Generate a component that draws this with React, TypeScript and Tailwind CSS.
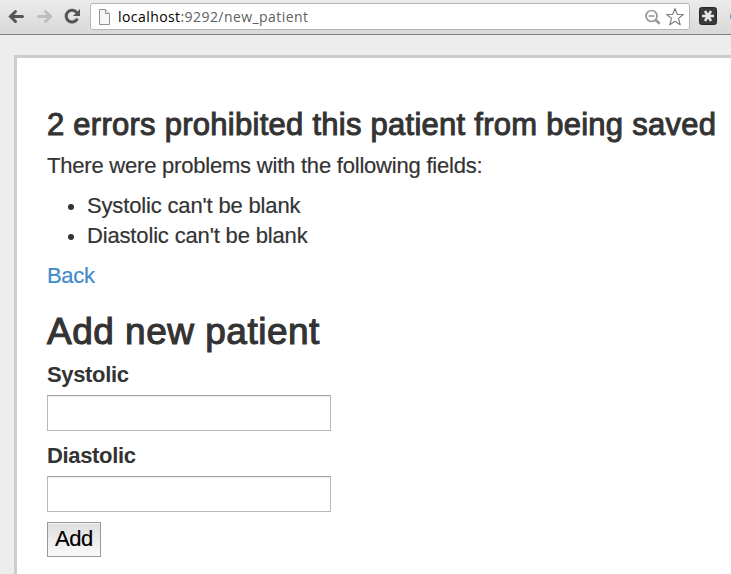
function BrowserBar() {
  return (
    <header className="flex h-[35px] shrink-0 items-start border-b border-[#808280] bg-linear-to-b from-[#ebebeb] to-[#d8d9d7]">
      <svg width="90" height="34" viewBox="0 0 90 34" fill="none" className="shrink-0">
        <g strokeWidth="3" strokeLinecap="round">
          <path d="M11 16.5H22.5M15.5 11.5L10.5 16.5L15.5 21.5" stroke="#555" />
          <path d="M38.5 16.5H50M45.5 11.5L50.5 16.5L45.5 21.5" stroke="#bdbdbd" />
        </g>
        <path d="M76.8 12.6A5.9 5.9 0 1 0 77.4 18.6" stroke="#555" strokeWidth="3" />
        <path d="M80 9V16H73Z" fill="#555" />
      </svg>
      <div className="mt-[3px] flex h-[27px] w-[600px] shrink-0 items-center rounded-[3px] border border-[#b5b7b5] bg-white pl-[7px]">
        <svg width="13" height="16" viewBox="0 0 13 16" className="shrink-0">
          <path d="M1.5 .5H7.5L11.5 4.5V15.5H1.5Z" fill="#f6f6f6" stroke="#919191" />
          <path d="M7.5 .5V4.5H11.5" fill="#eee" stroke="#919191" />
        </svg>
        <span className="ml-[7px] whitespace-nowrap font-['Open_Sans',sans-serif] text-[14px] leading-[20px] tracking-[0.43px] text-[#606060]">
          <span className="text-black">localhost</span>:9292/new_patient
        </span>
        <svg width="44" height="20" viewBox="0 0 44 20" fill="none" className="ml-auto shrink-0">
          <circle cx="6.5" cy="9" r="5.5" stroke="#999" strokeWidth="1.7" />
          <path d="M3.7 9H9.3" stroke="#999" strokeWidth="1.6" />
          <path d="M10.5 12.8L14.6 16.8" stroke="#999" strokeWidth="2.6" />
          <path d="M30 1.5L32.2 7.3L38.3 7.5L33.5 11.4L35.2 17.8L30 14.2L24.8 17.8L26.5 11.4L21.7 7.5L27.8 7.3Z" stroke="#808080" strokeWidth="1.2" strokeLinejoin="round" />
        </svg>
      </div>
      <svg width="41" height="34" viewBox="0 0 41 34" className="shrink-0">
        <rect x="9.5" y="7.5" width="17" height="17" rx="2" fill="#393939" stroke="#292929" />
        <path d="M12 16H24M15 11L21 21M21 11L15 21" stroke="#e8e8e8" strokeWidth="2.5" />
        <circle cx="45" cy="16.5" r="5" fill="#28a6cf" />
      </svg>
    </header>
  );
}

function Field({ label, id }: { label: string; id: string }) {
  return (
    <div className="mb-[10px] flex flex-col">
      <label htmlFor={id} className="mb-[5px] h-[30px] text-[22px] font-bold leading-[30px] tracking-[-0.34px]">
        {label}
      </label>
      <input
        id={id}
        className="h-[36px] w-[284px] border border-[#b8b8b8] border-t-[#a3a3a3] bg-white px-1 shadow-[inset_0_1px_0_#ededed] outline-none"
      />
    </div>
  );
}

function ErrorItem({ text }: { text: string }) {
  return (
    <li className="flex items-center">
      <span className="ml-[21px] mr-[13px] mt-[2px] size-[6px] rounded-full bg-[#333]" />
      {text}
    </li>
  );
}

export default function App() {
  return (
    <div className="flex h-[574px] w-[731px] flex-col overflow-hidden bg-[#ededed] font-['Liberation_Sans',Arial,sans-serif] text-[#333]">
      <BrowserBar />
      <main className="ml-[14px] mt-[20px] flex-1 whitespace-nowrap border-l-[3px] border-t-[3px] border-[#ccc] bg-white pl-[30px] pt-[50px]">
        <h2 className="h-[34px] text-[31px] leading-[34px] tracking-[0.26px] [-webkit-text-stroke:1px_#333]">
          2 errors prohibited this patient from being saved
        </h2>
        <p className="mt-[9px] text-[22px] leading-[30px] tracking-[-0.21px] [-webkit-text-stroke:0.2px_#333]">
          There were problems with the following fields:
        </p>
        <ul className="mt-[10px] text-[22px] leading-[30px] tracking-[-0.16px] [-webkit-text-stroke:0.2px_#333]">
          <ErrorItem text="Systolic can't be blank" />
          <ErrorItem text="Diastolic can't be blank" />
        </ul>
        <a href="#" className="mt-[10px] block w-fit text-[22px] leading-[30px] tracking-[-0.3px] text-[#428bca] [-webkit-text-stroke:0.2px_#428bca]">
          Back
        </a>
        <h1 className="mt-[20px] h-[42px] text-[37px] leading-[42px] tracking-[0.5px] [-webkit-text-stroke:1.1px_#333]">
          Add new patient
        </h1>
        <form className="mt-[7px]">
          <Field label="Systolic" id="systolic" />
          <Field label="Diastolic" id="diastolic" />
          <button
            type="button"
            className="flex h-[35px] w-[54px] items-start justify-center border border-[#999] bg-linear-to-b from-[#dedede] to-[#fafafa] pt-px text-[22px] leading-[30px] tracking-[-0.4px] text-black shadow-[inset_0_1px_0_#f4f4f4] [-webkit-text-stroke:0.2px_#000]"
          >
            Add
          </button>
        </form>
      </main>
    </div>
  );
}
